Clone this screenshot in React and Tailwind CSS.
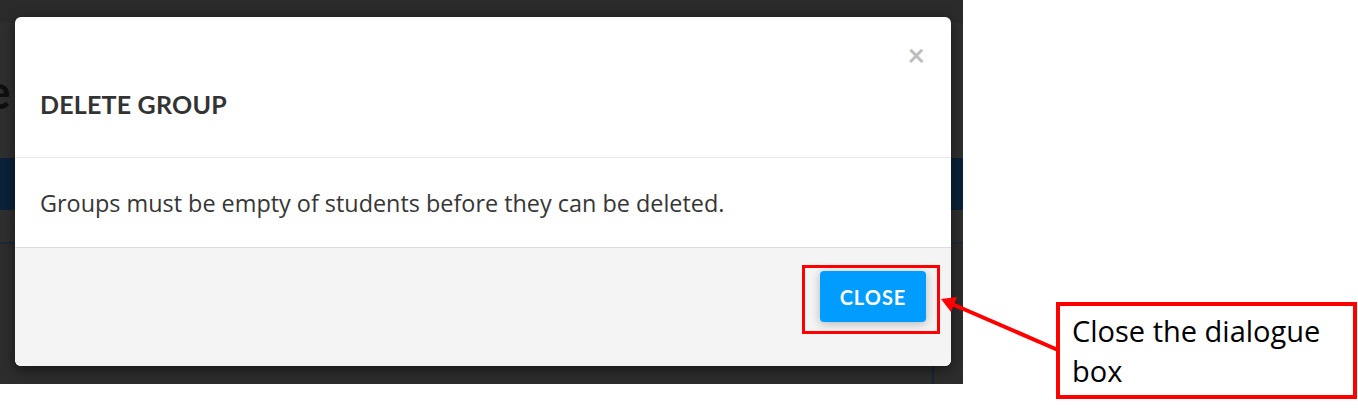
import React from "react";

export default function App() {
  return (
    <div className="relative w-[1358px] h-[410px] bg-white overflow-hidden">
      {/* dimmed page behind the modal */}
      <div className="relative w-[963px] h-[384px] bg-[#2b2b2b] overflow-hidden flex">
        <div className="flex-1 flex flex-col">
          <div className="h-[23px] bg-[#2b2b2b]" />
          <div className="h-[135px] bg-[#2f2f2f] flex items-start pt-[44px] overflow-hidden">
            <span
              className="ml-[-15px] text-[48px] font-bold text-[#0f0f0f] leading-none"
              style={{ fontFamily: "Lato, sans-serif" }}
            >
              e
            </span>
          </div>
          <div className="h-[52px] bg-[#0b2138]" />
          <div className="h-[32px] bg-[#2f2f2f]" />
          <div className="h-[2px] bg-[#1c2a3a]" />
          <div className="flex-1 bg-[#2d2d2d] flex justify-end pr-[29px]">
            <div className="w-[2px] self-end h-[24px] bg-[#14263a]" />
          </div>
        </div>

        {/* modal overlay */}
        <div className="absolute inset-0 pt-[17px] pl-[15px]">
          <div
            className="w-[936px] h-[349px] bg-white rounded-[6px] overflow-hidden flex flex-col shadow-[0_4px_14px_rgba(0,0,0,0.5)]"
            style={{ fontFamily: "Lato, 'Open Sans', sans-serif" }}
          >
            <div className="h-[141px] border-b border-[#e8e8e8] flex flex-col px-[25px] pt-[22px]">
              <div className="flex justify-end pr-[1px]">
                <span className="text-[30px] font-bold text-[#bdbdbd] leading-none">×</span>
              </div>
              <h2 className="mt-[23px] text-[25px] font-bold text-[#333333] leading-none tracking-[0.2px]">
                DELETE GROUP
              </h2>
            </div>
            <div className="h-[90px] border-b border-[#dcdcdc] px-[25px] pt-[34px]">
              <p
                className="text-[23.4px] text-[#363636] leading-none"
                style={{ fontFamily: "'Open Sans', sans-serif" }}
              >
                Groups must be empty of students before they can be deleted.
              </p>
            </div>
            <div className="flex-1 bg-[#f4f4f4] flex justify-end items-start pt-[23px] pr-[25px]">
              <button className="w-[106px] h-[51px] bg-[#009cff] rounded-[4px] text-white text-[20px] font-bold tracking-[1px] shadow-[0_2px_10px_rgba(0,0,0,0.25)]">
                CLOSE
              </button>
            </div>
          </div>
        </div>
      </div>

      {/* annotation: red highlight box around button */}
      <div className="absolute left-[802px] top-[265px] w-[138px] h-[69px] border-[3px] border-[#ff0000]" />

      {/* annotation arrow */}
      <svg className="absolute left-0 top-0" width="1358" height="410" viewBox="0 0 1358 410">
        <line x1="1058" y1="350" x2="952" y2="304" stroke="#ff0000" strokeWidth="4" />
        <polygon points="941,299 957,297 951,312" fill="#ff0000" />
      </svg>

      {/* callout */}
      <div
        className="absolute left-[1056px] top-[302px] w-[301px] h-[97px] border-[4px] border-[#ff0000] bg-white pl-[12px] pt-[5px]"
        style={{ fontFamily: "'Open Sans', sans-serif" }}
      >
        <p className="text-[29px] leading-[40px] text-black">
          Close the dialogue
          <br />
          box
        </p>
      </div>
    </div>
  );
}
